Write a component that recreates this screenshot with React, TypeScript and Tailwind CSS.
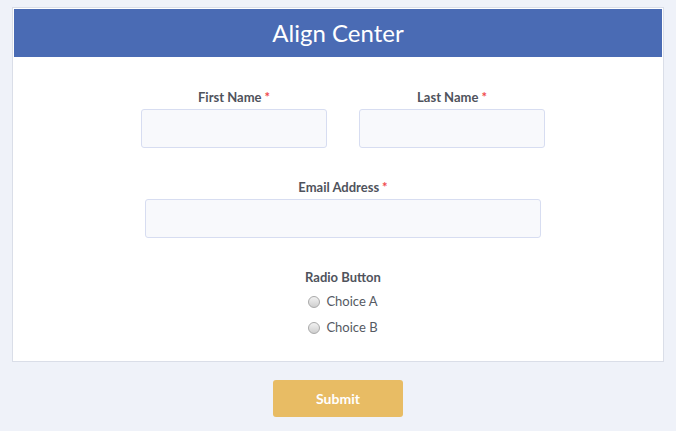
import { useState } from "react";

const Field = ({ label, width }: { label: string; width: string }) => (
    <div className={`flex flex-col items-center ${width}`}>
        <label className="h-[20px] text-[13px] leading-[20px] font-bold text-[#4f535c]">
            {label}
            <span className="ml-[3px] text-[#f0484b]">*</span>
        </label>
        <input
            type="text"
            className="mt-[2px] h-[39px] w-full rounded-[3px] border border-[#d7ddf1] bg-[#f8f9fc] px-2 outline-none"
        />
    </div>
);

const Radio = ({ label, checked, onClick }: { label: string; checked: boolean; onClick: () => void }) => (
    <button type="button" onClick={onClick} className="flex h-[26px] items-center gap-[6px]">
        <span className="flex h-[12px] w-[12px] items-center justify-center rounded-full border border-[#a9a9a9] bg-linear-to-b from-[#f2f2f2] to-[#cfcfcf]">
            {checked && <span className="h-[4px] w-[4px] rounded-full bg-[#444]" />}
        </span>
        <span className="text-[13px] text-[#555a63]">{label}</span>
    </button>
);

const App = () => {
    const [choice, setChoice] = useState("");

    return (
        <div className="min-h-screen bg-[#eff2f9] pt-[7px] font-['Lato','Liberation_Sans',sans-serif]">
            <div className="mx-[12px] w-[652px] border border-[#dadee8] bg-white p-px">
                <div className="flex h-[48px] items-center justify-center bg-[#4a6bb4] text-[24px] text-white">
                    Align Center
                </div>
                <form className="flex flex-col items-center pt-[30px] pb-[19px] pl-[10px]">
                    <div className="flex gap-[32px]">
                        <Field label="First Name" width="w-[186px]" />
                        <Field label="Last Name" width="w-[186px]" />
                    </div>
                    <div className="mt-[29px]">
                        <Field label="Email Address" width="w-[396px]" />
                    </div>
                    <div className="mt-[29px] flex flex-col items-center">
                        <span className="h-[20px] text-[13px] leading-[20px] font-bold text-[#4f535c]">
                            Radio Button
                        </span>
                        <div className="mt-[2px] flex flex-col items-start">
                            <Radio label="Choice A" checked={choice === "A"} onClick={() => setChoice("A")} />
                            <Radio label="Choice B" checked={choice === "B"} onClick={() => setChoice("B")} />
                        </div>
                    </div>
                </form>
            </div>
            <div className="flex justify-center pt-[18px]">
                <button className="h-[37px] w-[130px] rounded-[3px] bg-[#e8bc64] text-[14px] font-bold text-white">
                    Submit
                </button>
            </div>
        </div>
    );
};

export default App;
